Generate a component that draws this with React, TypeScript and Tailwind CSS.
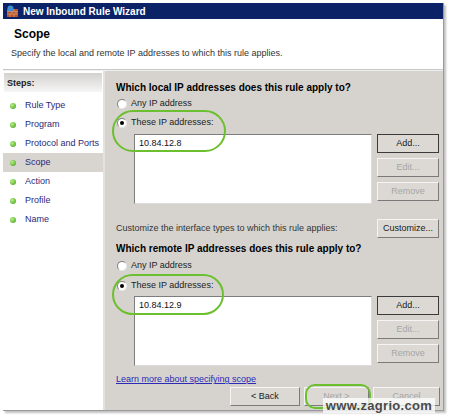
import React from 'react'

const steps = ['Rule Type', 'Program', 'Protocol and Ports', 'Scope', 'Action', 'Profile', 'Name']

function Radio({ checked }: { checked?: boolean }) {
  return (
    <span className="relative inline-flex items-center justify-center w-[10px] h-[10px] rounded-full bg-white border border-t-[#808080] border-l-[#808080] border-b-[#e8e8e8] border-r-[#e8e8e8]">
      {checked && <span className="w-[4px] h-[4px] rounded-full bg-black" />}
    </span>
  )
}

function Btn({ label, disabled, isDefault, className = '' }: { label: string; disabled?: boolean; isDefault?: boolean; className?: string }) {
  return (
    <div
      className={`flex items-center justify-center h-[19px] bg-[#dcd9d4] border ${
        isDefault ? 'border-[#3a3a3a]' : 'border-t-[#f4f4f4] border-l-[#f4f4f4] border-b-[#7a7a7a] border-r-[#7a7a7a]'
      } ${disabled ? 'text-[#a5a5a5]' : 'text-[#1a1a1a]'} ${className}`}
    >
      {label}
    </div>
  )
}

function IpBlock({ ip }: { ip: string }) {
  return (
    <div className="flex gap-[5px] pl-[18px]">
      <div className="w-[238px] h-[70px] bg-white border border-t-[#7d7d7d] border-l-[#7d7d7d] border-b-[#dcdcdc] border-r-[#dcdcdc] px-[4px] pt-[2px] text-[#111]">
        {ip}
      </div>
      <div className="flex flex-col gap-[5px] w-[62px]">
        <Btn label="Add..." isDefault />
        <Btn label="Edit..." disabled />
        <Btn label="Remove" disabled />
      </div>
    </div>
  )
}

function WallIcon() {
  return (
    <svg width="13" height="13" viewBox="0 0 13 13">
      <rect x="1" y="4" width="11" height="8" fill="#b5532f" />
      <path d="M1 6.5h11M1 9h11M4 4v2.5M8 4v2.5M6 6.5V9M10 6.5V9M4 9v3M8 9v3" stroke="#e0a070" strokeWidth="0.7" />
      <circle cx="4.5" cy="3.5" r="3" fill="#3b8ee0" />
      <path d="M3 2.2c1-.6 2-.3 2.4.4-.6.5-1.4.6-1.5 1.4-.6-.2-1-.9-.9-1.8z" fill="#4caf3a" />
    </svg>
  )
}

export default function App() {
  return (
    <div className="relative w-[450px] h-[416px] bg-white overflow-hidden text-[9px] text-[#222]" style={{ fontFamily: '"Liberation Sans", Arial, sans-serif' }}>
      <div className="ml-[3px] mt-[3px] w-[441px] h-[408px] flex flex-col border-r border-b border-[#9a9a9a] shadow-[2px_2px_2px_rgba(0,0,0,0.25)]">
        {/* title bar */}
        <div className="h-[16px] bg-[#0b2266] flex items-center gap-[4px] pl-[3px]">
          <WallIcon />
          <span className="text-white font-bold text-[10px]">New Inbound Rule Wizard</span>
        </div>

        {/* header */}
        <div className="h-[51px] bg-white pl-[8px] pt-[7px] border-b border-[#c8c8c8]">
          <div className="pl-[3px] text-[12px] font-bold text-black leading-[16px]">Scope</div>
          <div className="mt-[6px] leading-[11px] text-[#333]">Specify the local and remote IP addresses to which this rule applies.</div>
        </div>

        <div className="flex flex-1 border-t border-[#efefef]">
          {/* steps */}
          <div className="w-[102px] bg-white border-r-[2px] border-[#e4e2de] pt-[2px]">
            <div className="h-[19px] mx-[1px] bg-gradient-to-b from-[#d4d2ce] to-[#f6f6f6] flex items-center pl-[3px] pt-[2px] font-bold text-[#222]">
              Steps:
            </div>
            <div className="flex flex-col mt-[4px]">
              {steps.map(s => (
                <div key={s} className={`h-[19px] flex items-center gap-[9px] pl-[7px] ${s === 'Scope' ? 'bg-[#d8d5d0]' : ''}`}>
                  <span className="w-[6px] h-[6px] rounded-full bg-[radial-gradient(circle_at_35%_35%,#b8f080,#3e9a1c)]" />
                  <span className="text-[#2a2a7a]">{s}</span>
                </div>
              ))}
            </div>
          </div>

          {/* content */}
          <div className="flex-1 bg-[#d6d3ce] pl-[11px] pt-[9px] flex flex-col">
            <div className="h-[14px] flex items-center font-bold text-[10px] text-black">Which local IP addresses does this rule apply to?</div>
            <div className="h-[14px] mt-[3px] flex items-center gap-[4px] pl-[1px]"><Radio /> Any IP address</div>
            <div className="h-[14px] mt-[5px] flex items-center gap-[4px] pl-[1px]"><Radio checked /> These IP addresses:</div>
            <div className="mt-[4px]"><IpBlock ip="10.84.12.8" /></div>

            <div className="flex items-center justify-between mt-[15px] h-[19px]">
              <span className="text-[#333]">Customize the interface types to which this rule applies:</span>
              <Btn label="Customize..." className="w-[62px] mr-[4px]" />
            </div>

            <div className="h-[14px] mt-[3px] flex items-center font-bold text-[10px] text-black">Which remote IP addresses does this rule apply to?</div>
            <div className="h-[14px] mt-[4px] flex items-center gap-[4px] pl-[1px]"><Radio /> Any IP address</div>
            <div className="h-[14px] mt-[6px] flex items-center gap-[4px] pl-[1px]"><Radio checked /> These IP addresses:</div>
            <div className="mt-[3px]"><IpBlock ip="10.84.12.9" /></div>

            <div className="h-[14px] mt-[7px] flex items-center">
              <span className="text-[#2b2bb8] underline">Learn more about specifying scope</span>
            </div>
            <div className="flex justify-end gap-[4px] mr-[3px]">
              <Btn label="< Back" className="w-[70px] items-start pt-[2px]" />
              <Btn label="Next >" disabled className="w-[65px] items-start pt-[2px]" />
              <Btn label="Cancel" disabled className="w-[67px] items-start pt-[2px]" />
            </div>
          </div>
        </div>
      </div>

      {/* annotations */}
      <div className="absolute left-[112px] top-[110px] w-[114px] h-[42px] rounded-[22px] border-[2.5px] border-[#6cbf2e]" />
      <div className="absolute left-[112px] top-[274px] w-[112px] h-[41px] rounded-[22px] border-[2.5px] border-[#6cbf2e]" />
      <div className="absolute left-[305px] top-[384px] w-[66px] h-[25px] rounded-[10px] border-[2.5px] border-[#6cbf2e]" />
      <div className="absolute left-[323px] top-[398px] w-[112px] h-[15px] bg-white/75 flex items-center justify-center font-bold text-[13px] text-[#4a4a4a] tracking-[0.3px]">
        www.zagrio.com
      </div>
    </div>
  )
}
